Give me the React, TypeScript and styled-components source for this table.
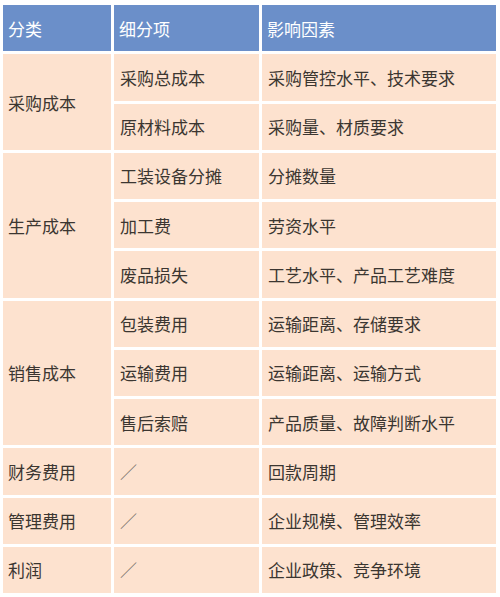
import React from 'react'
import styled, { createGlobalStyle } from 'styled-components'

const GlobalStyle = createGlobalStyle`
  html, body {
    margin: 0;
    padding: 0;
    background: #ffffff;
  }
  body {
    font-family: "Noto Sans CJK SC", "Noto Sans", sans-serif;
  }
`

const Page = styled.div`
  width: 500px;
  height: 597px;
  padding: 5px 4px 4px 3px;
  box-sizing: border-box;
`

const Grid = styled.div`
  display: grid;
  grid-template-columns: 108px 145px 1fr;
  grid-template-rows: repeat(12, 1fr);
  gap: 3px;
  height: 588px;
  background: #ffffff;
`

type CellProps = {
  $header?: boolean
  $span?: number
  $muted?: boolean
}

const Cell = styled.div<CellProps>`
  display: flex;
  align-items: center;
  padding-left: ${({ $header }) => ($header ? '5px' : '6px')};
  background: ${({ $header }) => ($header ? '#6b8fc9' : '#fde2cf')};
  color: ${({ $header, $muted }) => ($header ? '#ffffff' : $muted ? '#77706a' : '#3b3631')};
  font-size: 17px;
  line-height: 1;
  white-space: nowrap;
  grid-row: ${({ $span }) => ($span ? `span ${$span}` : 'auto')};

  &:first-child,
  &.first {
    padding-left: 5px;
  }
`

interface Group {
  category: string
  items: { name: string; factor: string }[]
}

const groups: Group[] = [
  {
    category: '采购成本',
    items: [
      { name: '采购总成本', factor: '采购管控水平、技术要求' },
      { name: '原材料成本', factor: '采购量、材质要求' },
    ],
  },
  {
    category: '生产成本',
    items: [
      { name: '工装设备分摊', factor: '分摊数量' },
      { name: '加工费', factor: '劳资水平' },
      { name: '废品损失', factor: '工艺水平、产品工艺难度' },
    ],
  },
  {
    category: '销售成本',
    items: [
      { name: '包装费用', factor: '运输距离、存储要求' },
      { name: '运输费用', factor: '运输距离、运输方式' },
      { name: '售后索赔', factor: '产品质量、故障判断水平' },
    ],
  },
  { category: '财务费用', items: [{ name: '／', factor: '回款周期' }] },
  { category: '管理费用', items: [{ name: '／', factor: '企业规模、管理效率' }] },
  { category: '利润', items: [{ name: '／', factor: '企业政策、竞争环境' }] },
]

const App: React.FC = () => {
  return (
    <Page>
      <GlobalStyle />
      <Grid>
        <Cell $header className="first">分类</Cell>
        <Cell $header>细分项</Cell>
        <Cell $header>影响因素</Cell>
        {groups.map((group) =>
          group.items.map((item, index) => (
            <React.Fragment key={group.category + item.name + index}>
              {index === 0 && (
                <Cell className="first" $span={group.items.length}>
                  {group.category}
                </Cell>
              )}
              <Cell $muted={item.name === '／'}>{item.name}</Cell>
              <Cell>{item.factor}</Cell>
            </React.Fragment>
          ))
        )}
      </Grid>
    </Page>
  )
}

export default App
